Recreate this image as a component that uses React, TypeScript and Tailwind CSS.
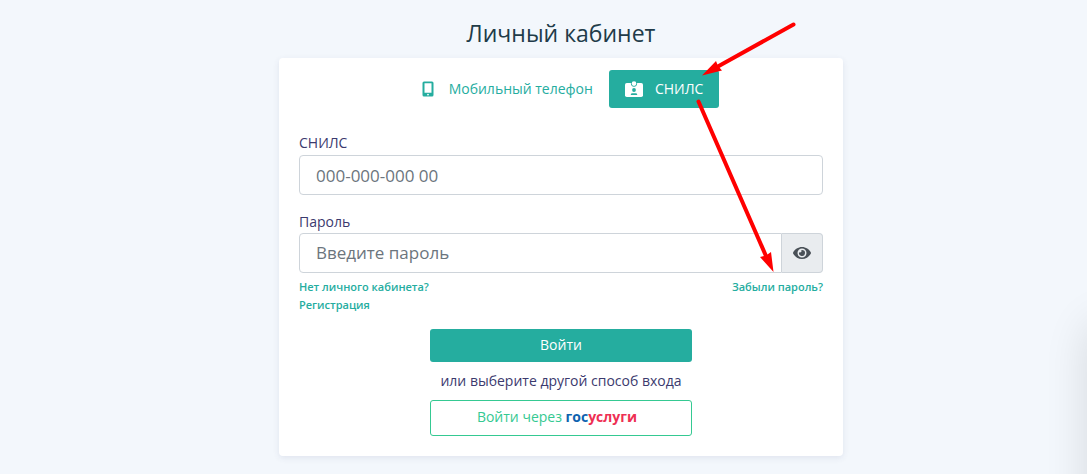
import { useState } from "react";
import { FaEye } from "react-icons/fa";

type IconProps = { className?: string };

function PhoneIcon({ className }: IconProps) {
  return (
    <svg className={className} viewBox="0 0 18 16" aria-hidden="true">
      <path
        fill="currentColor"
        fillRule="evenodd"
        d="M5 0.5h8a1.5 1.5 0 0 1 1.5 1.5v12a1.5 1.5 0 0 1-1.5 1.5h-8a1.5 1.5 0 0 1-1.5-1.5v-12a1.5 1.5 0 0 1 1.5-1.5zM5.5 2.3v9.4h7v-9.4zM9 12.7a0.9 0.9 0 1 0 0 1.8a0.9 0.9 0 0 0 0-1.8z"
      />
    </svg>
  );
}

function BadgeIcon({ className }: IconProps) {
  return (
    <svg className={className} viewBox="0 0 18 16" aria-hidden="true">
      <rect x="0" y="2" width="18" height="14" rx="1.8" fill="currentColor" />
      <circle cx="9" cy="2.6" r="3.1" className="fill-[#25ad9f]" />
      <circle cx="9" cy="2.6" r="2.3" fill="currentColor" />
      <circle cx="9" cy="9" r="1.9" className="fill-[#25ad9f]" />
      <path d="M5.8 14v-0.4q0-1.4 1.6-1.4h3.2q1.6 0 1.6 1.4v0.4z" className="fill-[#25ad9f]" />
    </svg>
  );
}

const tabs = [
  { id: "phone", name: "Мобильный телефон", icon: PhoneIcon },
  { id: "snils", name: "СНИЛС", icon: BadgeIcon },
];

function Arrows() {
  return (
    <svg
      className="pointer-events-none absolute top-0 right-0 h-[398px] w-[564px] overflow-visible"
      viewBox="0 0 564 398"
      fill="#ff0000"
      stroke="#ff0000"
      aria-hidden="true"
    >
      <path d="M514.5 -33.5L438 9" strokeWidth="4" strokeLinecap="round" />
      <path d="M423 17.5L437 3L439 8L443 12.5Z" stroke="none" />
      <path d="M419.5 43.5L487 198" strokeWidth="4" strokeLinecap="round" />
      <path d="M494.5 214L481 199L487 197.5L492 194Z" stroke="none" />
    </svg>
  );
}

export default function App() {
  const [tab, setTab] = useState("snils");
  const [showPassword, setShowPassword] = useState(false);

  return (
    <div className="relative min-h-screen overflow-hidden bg-[#f3f7fc] pt-4 pb-[18px] pl-[35px] font-['Open_Sans','Noto_Sans',sans-serif] text-sm text-[#3b3a6e]">
      <main className="mx-auto w-full max-w-[564px]">
        <h1 className="mb-2 text-center text-[23px] leading-[34px] text-[#213b49]">
          Личный кабинет
        </h1>

        <div className="relative rounded-sm bg-white px-5 pt-3 pb-5 shadow-[0_2px_6px_rgba(60,70,120,0.1)]">
          {/* Login method */}
          <div className="flex justify-center">
            {tabs.map((item) => (
              <button
                key={item.id}
                type="button"
                onClick={() => setTab(item.id)}
                className={`flex h-[38px] items-center gap-3 rounded-[3px] px-4 whitespace-nowrap ${
                  tab === item.id ? "bg-[#25ad9f] text-white" : "text-[#25ad9f]"
                }`}
              >
                <item.icon className="h-4 w-[18px]" />
                {item.name}
              </button>
            ))}
          </div>

          <form className="mt-6" onSubmit={(e) => e.preventDefault()}>
            <label htmlFor="snils" className="block leading-[22px]">
              СНИЛС
            </label>
            <input
              id="snils"
              type="text"
              placeholder="000-000-000 00"
              className="mt-px block h-10 w-full rounded border border-[#ced4da] bg-white px-4 text-[17px] placeholder:text-[#6c757d]"
            />

            <label htmlFor="password" className="mt-4 block leading-[22px]">
              Пароль
            </label>
            <div className="flex h-10">
              <input
                id="password"
                type={showPassword ? "text" : "password"}
                placeholder="Введите пароль"
                className="min-w-0 flex-1 rounded-l border border-[#ced4da] bg-white px-4 text-[17px] placeholder:text-[#6c757d]"
              />
              <button
                type="button"
                aria-label="Показать пароль"
                onClick={() => setShowPassword(!showPassword)}
                className="flex w-[41px] items-center justify-center rounded-r border border-l-0 border-[#ced4da] bg-[#e9ecef] text-[#495057]"
              >
                <FaEye className="h-4 w-[18px]" />
              </button>
            </div>

            <div className="mt-[5px] flex items-start justify-between text-[11px] leading-[18px] font-semibold text-[#25ad9f]">
              <a href="#register">
                Нет личного кабинета?
                <br />
                Регистрация
              </a>
              <a href="#forgot">Забыли пароль?</a>
            </div>

            <div className="mx-auto mt-[15px] flex w-1/2 flex-col">
              <button type="submit" className="h-[33px] rounded-[3px] bg-[#25ad9f] pb-px text-white">
                Войти
              </button>
              <p className="text-center leading-[38px] whitespace-nowrap">
                или выберите другой способ входа
              </p>
              <button
                type="button"
                className="h-9 rounded-[3px] border border-[#35c992] pr-2 pb-0.5 text-[#35c992]"
              >
                Войти через{" "}
                <span className="font-bold text-[#0d63af]">
                  гос<span className="text-[#ee2f53]">услуги</span>
                </span>
              </button>
            </div>
          </form>

          <Arrows />
        </div>
      </main>

      {/* Shadow of the chat widget docked past the right edge */}
      <div className="absolute top-[320px] -right-12 -bottom-20 w-12 rounded-3xl shadow-[0_0_44px_rgba(0,0,0,0.12)]" />
    </div>
  );
}
